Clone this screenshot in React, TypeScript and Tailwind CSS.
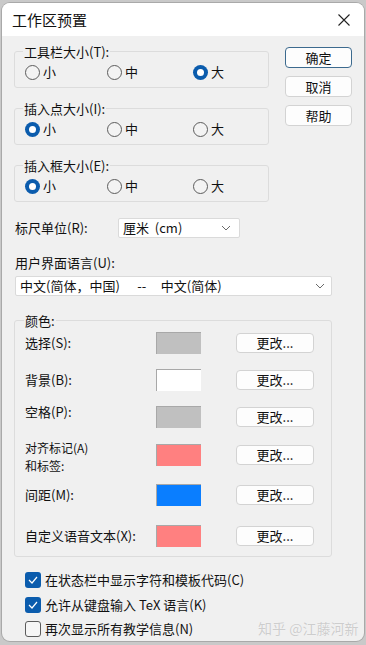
import React from "react";

const Radio = ({ checked, label, w }: { checked?: boolean; label: string; w?: string }) => (
  <div className={`flex items-center h-[16px] ${w ?? ""}`}>
    {checked ? (
      <span className="w-[15px] h-[15px] rounded-full bg-[#0b5cad] flex items-center justify-center">
        <span className="w-[7px] h-[7px] rounded-full bg-white" />
      </span>
    ) : (
      <span className="w-[15px] h-[15px] rounded-full border border-[#5c5c5c] bg-[#f3f3f3]" />
    )}
    <span className="ml-[3px] text-[13px] leading-[14px]">{label}</span>
  </div>
);

const Group = ({ title, sel, className }: { title: string; sel: number; className?: string }) => (
  <fieldset className={`border border-[#dcdcdc] rounded-[3px] pl-[10px] pt-[6px] pb-[7px] ${className ?? ""}`}>
    <legend className="-ml-[2px] px-[1px] text-[13px] leading-[13px]">{title}</legend>
    <div className="flex">
      <Radio checked={sel === 0} label="小" w="w-[82px]" />
      <Radio checked={sel === 1} label="中" w="w-[86px]" />
      <Radio checked={sel === 2} label="大" />
    </div>
  </fieldset>
);

const Btn = ({ label, def }: { label: string; def?: boolean }) => (
  <div
    className={`w-[67px] h-[21px] rounded-[4px] bg-[#fdfdfd] flex items-center justify-center text-[13px] leading-[14px] ${
      def ? "border border-[#3c6a8e]" : "border border-[#d3d3d3]"
    }`}
  >
    {label}
  </div>
);

const Chevron = () => (
  <svg width="10" height="6" viewBox="0 0 10 6" fill="none">
    <polyline points="1,1 5,5 9,1" stroke="#6a6a6a" strokeWidth="1" />
  </svg>
);

const ColorRow = ({
  label,
  color,
  mt,
  labelClass,
}: {
  label: React.ReactNode;
  color: string;
  mt: string;
  labelClass?: string;
}) => (
  <div className={`flex items-center h-[22px] ${mt}`}>
    <div className={`w-[141px] pl-[10px] text-[13px] leading-[14px] ${labelClass ?? ""}`}>{label}</div>
    <div className={`w-[45px] h-[22px] border-t border-l border-[#a8a8a8] ${color}`} />
    <div className="ml-[35px] w-[78px] h-[20px] rounded-[4px] bg-[#fdfdfd] border border-[#d3d3d3] flex items-center justify-center text-[13px] leading-[14px]">
      更改...
    </div>
  </div>
);

const Check = ({ checked, label, mt }: { checked?: boolean; label: string; mt: string }) => (
  <div className={`flex items-center h-[16px] ml-[11px] ${mt}`}>
    {checked ? (
      <span className="w-[16px] h-[16px] rounded-[3px] bg-[#0b5cad] flex items-center justify-center">
        <svg width="10" height="8" viewBox="0 0 10 8" fill="none">
          <polyline points="1,4 4,7 9,1" stroke="white" strokeWidth="1.2" />
        </svg>
      </span>
    ) : (
      <span className="w-[16px] h-[16px] rounded-[3px] border border-[#5c5c5c] bg-[#f6f6f6]" />
    )}
    <span className="ml-[4px] text-[13px] leading-[14px]">{label}</span>
  </div>
);

export default function App() {
  return (
    <div className="w-[366px] h-[645px] bg-[#c9c9c9] pt-[3px] pl-[2px] overflow-hidden font-['Noto_Sans_CJK_SC',sans-serif] text-[#111]">
      <div className="relative w-[362px] h-[638px] rounded-[8px] overflow-hidden bg-[#f0f0f0] shadow-[0_0_0_1px_#a9a9a9]">
        <div className="h-[33px] bg-white flex items-center justify-between pl-[10px] pr-[14px]">
          <span className="text-[15px] leading-[16px]">工作区预置</span>
          <svg width="12" height="12" viewBox="0 0 12 12" fill="none">
            <path d="M0.5 0.5 L11.5 11.5 M11.5 0.5 L0.5 11.5" stroke="#222" strokeWidth="1.1" />
          </svg>
        </div>

        <div className="pl-[12px] pt-[9px]">
          <div className="flex">
            <div className="w-[255px]">
              <Group title="工具栏大小(T):" sel={2} />
              <Group title="插入点大小(I):" sel={0} className="mt-[14px]" />
              <Group title="插入框大小(E):" sel={0} className="mt-[14px]" />
            </div>
            <div className="ml-[16px] mt-[2px] flex flex-col gap-[8px]">
              <Btn label="确定" def />
              <Btn label="取消" />
              <Btn label="帮助" />
            </div>
          </div>

          <div className="flex items-center mt-[16px]">
            <div className="w-[104px] pl-[1px] text-[13px] leading-[14px]">标尺单位(R):</div>
            <div className="w-[122px] h-[20px] bg-white border border-[#dadada] rounded-[2px] flex items-center justify-between pl-[4px] pr-[8px]">
              <span className="text-[13px] leading-[14px] whitespace-pre">厘米  (cm)</span>
              <Chevron />
            </div>
          </div>

          <div className="mt-[18px] pl-[1px] text-[13px] leading-[14px]">用户界面语言(U):</div>
          <div className="mt-[6px] ml-[1px] w-[317px] h-[20px] bg-white border border-[#dadada] rounded-[2px] flex items-center justify-between pl-[4px] pr-[6px]">
            <span className="text-[13px] leading-[14px] whitespace-pre">中文(简体，中国)      --     中文(简体)</span>
            <Chevron />
          </div>

          <fieldset className="mt-[18px] w-[318px] border border-[#dcdcdc] rounded-[3px] pt-[5px] pb-[9px]">
            <legend className="ml-[9px] px-[1px] text-[13px] leading-[13px]">颜色:</legend>
            <ColorRow label="选择(S):" color="bg-[#c0c0c0]" mt="" />
            <ColorRow label="背景(B):" color="bg-white" mt="mt-[15px]" />
            <ColorRow label="空格(P):" color="bg-[#c0c0c0]" mt="mt-[15px]" labelClass="-mt-[10px]" />
            <ColorRow
              label={
                <div className="text-[12px] leading-[18px]">
                  <div>对齐标记(A)</div>
                  <div>和标签:</div>
                </div>
              }
              color="bg-[#ff8080]"
              mt="mt-[16px]"
              labelClass="mt-[4px]"
            />
            <ColorRow label="间距(M):" color="bg-[#0a7eff]" mt="mt-[18px]" />
            <ColorRow label="自定义语音文本(X):" color="bg-[#ff8080]" mt="mt-[19px]" />
          </fieldset>

          <Check checked label="在状态栏中显示字符和模板代码(C)" mt="mt-[15px]" />
          <Check checked label="允许从键盘输入 TeX 语言(K)" mt="mt-[9px]" />
          <Check label="再次显示所有教学信息(N)" mt="mt-[8px]" />
        </div>

        <div className="absolute left-[256px] top-[617px] text-[14px] leading-[16px] text-[#cdcdcd] [text-shadow:0_0_1px_#ffffff]">
          知乎 @江藤河新
        </div>
      </div>
    </div>
  );
}
